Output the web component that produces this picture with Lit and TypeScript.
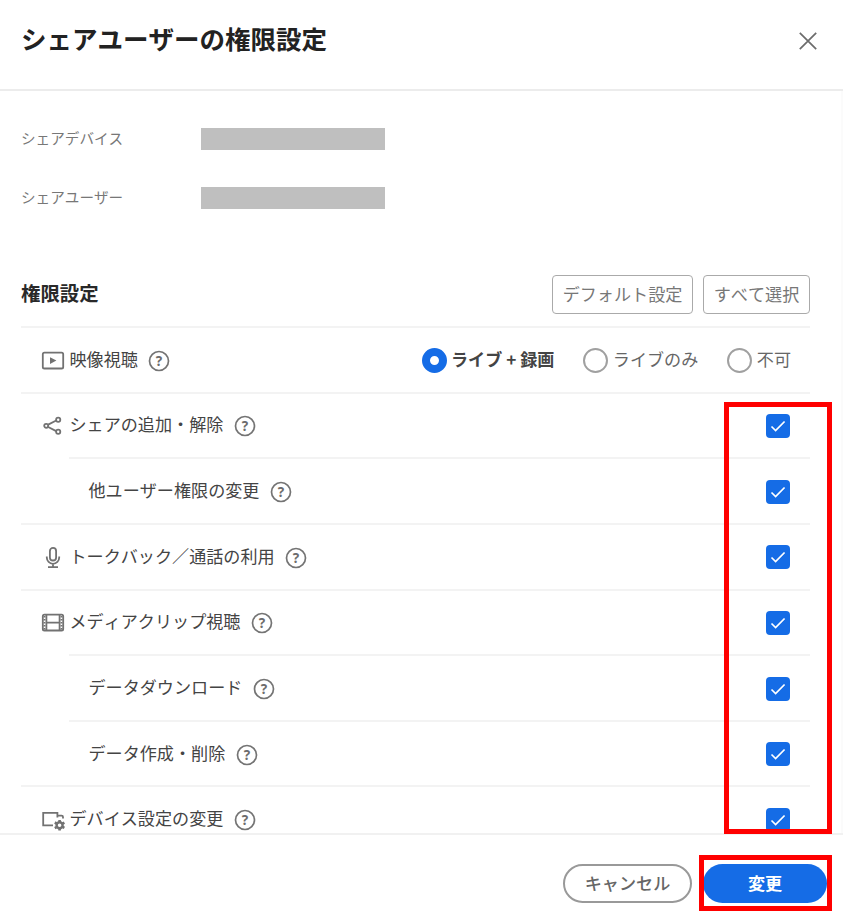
import { LitElement, html, svg, css, nothing } from "lit";
import { customElement, property, state } from "lit/decorators.js";
import { classMap } from "lit/directives/class-map.js";

const icons: Record<string, unknown> = {
  video: svg`<rect x="1.8" y="3.7" width="20.4" height="15.8" rx="1.6"/><path d="M9 8.2v6.8l6.4-3.4z" fill="currentColor" stroke="none"/>`,
  share: svg`<path d="M7.2 10.6l8-4.1M7.2 13l8 4.1"/><circle cx="5.2" cy="11.8" r="2"/><circle cx="17.2" cy="5.8" r="2.1"/><circle cx="17.2" cy="17.8" r="2.1"/>`,
  mic: svg`<rect x="8.9" y="1.9" width="6.2" height="12.6" rx="3.1"/><path d="M5.8 10.4v1.2a6.2 6.2 0 0 0 12.4 0v-1.2M12 17.8v3.4M7 21.2h10"/>`,
  film: svg`<rect x="1.8" y="3.7" width="20.4" height="15.8" rx="1.6"/><path d="M5.4 4v15.2M18.6 4v15.2M5.4 11.6h13.2"/><path d="M3.5 5v13.6M20.5 5v13.6" stroke-dasharray="1.5 1.5"/>`,
  device: svg`<path d="M12 17.4H2.2V4.8H16.4v4.6M16.4 7.6h4.2q1.4 0 1.4 1.4v1.6"/><path d="M18.6 12v2M18.6 20.6v2M13.8 14.5l1.8 1M21.6 18.9l1.8 1M13.8 20.1l1.8-1M21.6 15.7l1.8-1" stroke-width="2.6"/><circle cx="18.6" cy="17.3" r="3" stroke-width="2.4"/>`,
};

interface Permission {
  label: string;
  icon?: string;
  radio?: boolean;
}

const permissions: Permission[] = [
  { label: "映像視聴", icon: "video", radio: true },
  { label: "シェアの追加・解除", icon: "share" },
  { label: "他ユーザー権限の変更" },
  { label: "トークバック／通話の利用", icon: "mic" },
  { label: "メディアクリップ視聴", icon: "film" },
  { label: "データダウンロード" },
  { label: "データ作成・削除" },
  { label: "デバイス設定の変更", icon: "device" },
];

@customElement("permission-row")
class PermissionRow extends LitElement {
  @property({ attribute: false }) item!: Permission;
  @state() private checked = true;
  @state() private choice = 0;

  static styles = css`
    :host { display: block; }
    .row {
      box-sizing: border-box; height: 65.65px; display: flex; align-items: center;
      border-top: 2px solid #f3f3f3; color: #444; padding-left: 19.5px;
    }
    .child { margin-left: 48px; }
    .icon {
      width: 24px; height: 24px; margin: 2px 5px 0 0; flex: none;
      fill: none; stroke: currentColor; stroke-width: 1.8; color: #727272;
    }
    .label { line-height: 24px; margin-top: -2px; }
    .help {
      width: 22px; height: 22px; margin: 2px 0 0 10.5px; display: block; flex: none;
      fill: none; stroke: #747474; stroke-width: 1.7;
    }
    .help text {
      font: 700 13.5px "Noto Sans", sans-serif; text-anchor: middle; fill: #6c6c6c; stroke: none;
    }
    .spacer { flex: 1; }
    .radios { display: flex; padding-right: 19px; }
    .radio { display: flex; align-items: center; color: #666; white-space: nowrap; }
    .radio + .radio { margin-left: 29px; }
    .radio.on { font-weight: 700; color: #444; }
    .name { margin-top: -2px; }
    .dot {
      box-sizing: border-box; width: 25px; height: 25px; border: 2px solid #a0a0a0;
      border-radius: 50%; margin: 1px 4.5px 0 0; background: #fff;
    }
    .on .dot { border: 8.5px solid #156ce6; }
    .check {
      width: 24px; height: 24px; border-radius: 4px; background: #156ce6;
      margin: 1.4px 20px 0 0; display: block; fill: none; stroke: #fff; stroke-width: 1.7;
    }
    .blank { background: #fff; outline: 1px solid #aaa; }
  `;

  render() {
    const { label, icon, radio } = this.item;
    return html`<div class=${classMap({ row: true, child: !icon })}>
      ${icon ? html`<svg class="icon" viewBox="0 0 24 24">${icons[icon]}</svg>` : nothing}
      <span class="label">${label}</span>
      <svg class="help" viewBox="0 0 22 22"><circle cx="11" cy="11" r="9.5"/><text x="11" y="15.8">?</text></svg>
      <span class="spacer"></span>
      ${radio
        ? html`<div class="radios">
            ${["ライブ + 録画", "ライブのみ", "不可"].map(
              (name, i) => html`<label class=${classMap({ radio: true, on: i === this.choice })}
                @click=${() => (this.choice = i)}><span class="dot"></span><span class="name">${name}</span></label>`
            )}
          </div>`
        : html`<svg class=${classMap({ check: true, blank: !this.checked })} viewBox="0 0 24 24"
            @click=${() => (this.checked = !this.checked)}>
            <path d="M5.5 12.5l4.1 4 9-9"/>
          </svg>`}
    </div>`;
  }
}

@customElement("app-root")
class AppRoot extends LitElement {
  static styles = css`
    :host {
      display: flex; flex-direction: column; position: relative; height: 921px; width: 843px;
      overflow: hidden; background: #fff; color: #444;
      font: 400 17.1px/24px "Noto Sans CJK JP", sans-serif; font-kerning: none;
    }
    .header {
      box-sizing: border-box; height: 91px; flex: none; display: flex; align-items: flex-start;
      justify-content: space-between; padding: 20px 26px 0 21px; border-bottom: 2px solid #ececec;
    }
    .title { margin: 0; font-size: 25.5px; line-height: 36px; font-weight: 700; color: #222; }
    .close { width: 18px; height: 18px; margin-top: 11.5px; stroke: #6c6c6c; stroke-width: 1.7; fill: none; }
    .body {
      box-sizing: border-box; height: 742px; overflow: hidden; padding: 0 31px 0 21px;
      border-right: 2px solid #fbfbfb;
    }
    .info { display: grid; grid-template-columns: 180px 184px; row-gap: 37px; padding-top: 37px; }
    .info-label { font-size: 14.6px; line-height: 22px; margin-top: -1px; height: 23px; margin-bottom: -1px; color: #777; }
    .mask { height: 22px; background: #bfbfbf; }
    .section { display: flex; align-items: center; gap: 10px; height: 39px; margin: 66px 0 12px; }
    .section-title { margin: -4px 0 0; flex: 1; font-size: 19.4px; line-height: 28px; font-weight: 700; color: #292929; }
    .small {
      box-sizing: border-box; height: 39px; border: 1.5px solid #aaa; border-radius: 4px;
      background: #fff; color: #777; font: inherit; font-kerning: none; padding: 0 0 2px;
    }
    .reset { width: 141px; }
    .all { width: 107px; }
    .footer {
      box-sizing: border-box; height: 88px; border-top: 2px solid #f1f1f1; display: flex;
      justify-content: flex-end; gap: 11px; padding: 29px 16px 0 0;
    }
    .pill { box-sizing: border-box; height: 39px; border-radius: 20px; font: inherit; font-kerning: none; padding: 0 0 2px; }
    .cancel { width: 129px; border: 2px solid #999; background: #fff; color: #666; font-weight: 500; }
    .submit { width: 124px; border: 0; background: #156ce6; color: #fff; font-weight: 700; }
    .frame { position: absolute; box-sizing: border-box; border: 5px solid #f00; pointer-events: none; }
    .frame-checks { left: 724px; top: 402px; width: 108px; height: 432px; }
    .frame-submit { left: 699px; top: 855px; width: 133px; height: 56px; }
  `;

  render() {
    return html`
      <header class="header">
        <h1 class="title">シェアユーザーの権限設定</h1>
        <svg class="close" viewBox="0 0 18 18"><path d="M.8.8l16.4 16.4M17.2.8L.8 17.2"/></svg>
      </header>
      <main class="body">
        <div class="info">
          <span class="info-label">シェアデバイス</span><span class="mask"></span>
          <span class="info-label">シェアユーザー</span><span class="mask"></span>
        </div>
        <div class="section">
          <h2 class="section-title">権限設定</h2>
          <button class="small reset">デフォルト設定</button>
          <button class="small all">すべて選択</button>
        </div>
        ${permissions.map((item) => html`<permission-row .item=${item}></permission-row>`)}
      </main>
      <footer class="footer">
        <button class="pill cancel">キャンセル</button>
        <button class="pill submit">変更</button>
      </footer>
      <div class="frame frame-checks"></div>
      <div class="frame frame-submit"></div>
    `;
  }
}
